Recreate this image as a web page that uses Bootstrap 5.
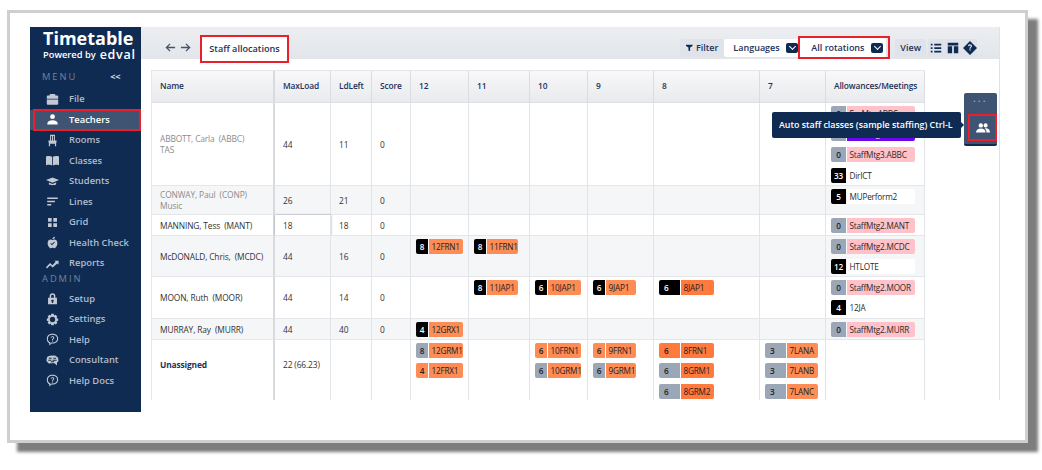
<!DOCTYPE html>
<html lang="en"><head><meta charset="utf-8"><title>Staff allocations</title>
<link href="https://cdn.jsdelivr.net/npm/bootstrap@5.3.0/dist/css/bootstrap.min.css" rel="stylesheet">
<style>
html,body{height:100%;overflow:hidden;background:#fff}
body{font-family:"Open Sans","Noto Sans",sans-serif;font-size:8.4px;color:#333;padding:10px 0 0 7px}
.frame{width:1021px;height:433px;border:3px solid #cfcfcf;background:#fff;box-shadow:10px 9px 3px #7d7d7d;padding:14px 0 0 20px}
.side{width:111px;height:385px;background:#0f2b52;color:#b9c1cd;flex:none;padding-top:1px}
.brand{color:#fff;font-weight:700;font-size:18px;line-height:21px;padding-left:13px}
.brand2{color:#fff;font-weight:600;font-size:9.3px;line-height:11px;padding-left:13px;white-space:nowrap;display:flex;align-items:center;gap:4px;height:11px}
.brand2 b{font-weight:600;font-size:12.5px;letter-spacing:.7px;line-height:11px}
.sect{color:#73839b;font-size:9.3px;letter-spacing:2px;padding:0 21px 0 12px;line-height:13px}
.sect.m1{margin-top:10px;margin-bottom:6px}
.sect.m1 .cc{letter-spacing:-.5px;color:#d5dae2;font-weight:700}
.sect.m2{line-height:12px;margin-top:-1px;margin-bottom:4px}
.side .nav-link{display:flex;align-items:center;height:20.5px;padding:0 0 0 15.5px;color:#b4bcc9;font-size:9.4px;font-weight:600;gap:10.5px;white-space:nowrap;position:relative}
.side .nav-link svg{width:13px;height:13px;flex:none;fill:#c3c9d3}
.side .nav-link.act{background:#3f5373;color:#fff}
.side .nav-link.act::after{content:"";position:absolute;left:3px;right:0;top:-1px;bottom:-1px;border:2px solid #e8202c}
.side .nav-link.act svg{fill:#fff}
.mainp{width:859px;height:373px;border-right:1px solid #dfe2e6;overflow:hidden;position:relative;flex:none}
.topb{height:32px;background:linear-gradient(#eceef1,#e2e5ea);padding:9px 22px 0 24px}
.arrows svg{width:11px;height:11px;fill:none;stroke:#42546f;stroke-width:1.4}
.tabb{height:28px;width:89px;align-self:flex-start;margin:-1px 0 0 9px;border:2px solid #e8202c;background:#fff;color:#1c3358;font-weight:600;font-size:9.1px;line-height:24px;text-align:center;white-space:nowrap}
.tbtn{font-size:9px;font-weight:600;color:#1c3358;padding:0 5px;height:18px;line-height:18px;border-radius:2px;background:#e0e4ea;white-space:nowrap;border:0}
.tbtn.fl{gap:3px;padding:0 6px 0 6px;width:44px}
.dd{background:#fff;height:18px;display:flex;align-items:center;justify-content:space-between;font-size:9px;font-weight:600;color:#1c3358;white-space:nowrap}
.dd i{width:12px;height:10px;border-radius:2px;background:#0f2b52;display:flex;align-items:center;justify-content:center}
.dd i::after{content:"";width:5px;height:5px;border:solid #fff;border-width:0 1.5px 1.5px 0;transform:translateY(-1px) rotate(45deg)}
.dd1{width:75px;padding:0 1px 0 9px;border-radius:2px 0 0 2px}
.dd2{width:92px;height:23px;padding:0 5px 0 11px;border:2px solid #e8202c;margin-left:-1px;box-shadow:inset -2px 0 0 #e0e4ea}
.vicons{background:#e0e4ea;height:18px;margin-left:2px;padding:0 0 0 1px;border-radius:2px;gap:3px}
.vicons svg{width:14px;height:14px;fill:#0f2b52}
.tw{padding:11px 0 0 10px}
.grid{width:773px;table-layout:fixed;border-collapse:separate;border-spacing:0;margin:0;font-size:8.4px;--bs-table-bg:transparent;border-top:1px solid #e4e6ea;border-left:1px solid #e4e6ea;letter-spacing:-.13px}
.grid th{height:32px;padding:0 0 0 8px;background:linear-gradient(#f8f8f9,#e8eaed);color:#1c3358;font-weight:600;font-size:8.4px;vertical-align:middle;border:0;border-right:1px solid #d9dce1;border-bottom:1px solid #dcdfe4;white-space:nowrap}
.grid td{padding:0 0 0 8px;vertical-align:middle;border:0;border-right:1px solid #e1e4e8;border-bottom:1px solid #e4e6ea;line-height:11px;white-space:nowrap;color:#333;box-shadow:none}
.grid td.ch{padding:2.500px 0 0 5px;vertical-align:top}
.grid td.upp{vertical-align:top;padding-top:19px}
.grid td:first-child,.grid th:first-child{border-right:2px solid #d8dade}
.grid .alt td{background:#f5f6f8}
.grid .dim{color:#8b8b8b}
.grid .una{color:#1c3358;font-weight:700}
.grid td.inp{background:#fff;box-shadow:0 0 2px #9aa0a8}
.r1{height:83px}.r2{height:29px}.r3{height:21px}.r4{height:41px}.r5{height:42px}.r6{height:21px}.r7{height:70px}
.chip{display:flex;height:15px;line-height:15px;margin-bottom:5.7px;border-radius:2px;overflow:hidden;font-size:8.200px;color:#2a2a2a;letter-spacing:-.2px}
.chip:last-child{margin-bottom:0}
.chip b{font-weight:600;text-align:center;flex:none;margin-right:1px;width:12px}
.chip span{flex:1;padding-left:2.500px;white-space:nowrap;overflow:hidden}
.k{background:#000;color:#fff}.g{background:#9ba6b6;color:#222}.o{background:#ff8c55;color:#222}.o2{background:#ff7a3c}
.s{background:#ffc2c8}.w{background:#fff}.pu{background:#6a06f0;color:#fff}
.w47{width:47px}.w44{width:44px}.w46{width:46px}.w43{width:43px}
.w55{width:55px}.w55 b{width:21px;text-align:left;padding-left:5px}
.w53{width:53px}.w53 b{width:21px;text-align:left;padding-left:5px}
.w84{width:84px}.w84 b{width:15px}
.tipx{position:absolute;left:631px;top:85px;width:189px;height:26px;background:#0f2b52;color:#fff;font-weight:600;font-size:8.900px;line-height:26px;padding-left:7px;border-radius:2px;white-space:nowrap}
.tipx::after{content:"";position:absolute;right:-3px;top:9px;border:4px solid transparent;border-left-color:#0f2b52;border-right:0}
.rail{position:absolute;left:823px;top:66px;width:33px;height:53px;background:#3f5373;border-radius:2px;border-bottom:2px solid #0f2b52}
.rail .dots{color:#a9b3c2;text-align:center;font-size:8px;letter-spacing:2.500px;line-height:11px;font-weight:700;padding-bottom:4px}
.rail .rb{margin:6px 0 0 4px;width:29px;height:27px;border:2px solid #e8202c;display:flex;align-items:center;justify-content:center}
.rail svg{width:14px;height:14px;fill:#fff}
</style></head><body>
<div class="frame"><div class="d-flex">
<div class="side">
<div class="brand">Timetable</div>
<div class="brand2"><span>Powered by</span><b>edval</b></div>
<div class="sect m1 d-flex justify-content-between"><span>MENU</span><span class="cc">&lt;&lt;</span></div>
<nav class="nav flex-column">
<a class="nav-link"><svg viewBox="0 0 16 16"><path d="M4.500 3V2.200C4.500 1.600 4.900 1.300 5.500 1.300H10.500C11.100 1.300 11.500 1.600 11.500 2.200V3H14C14.600 3 15 3.400 15 4V7H1V4C1 3.400 1.400 3 2 3ZM1 8H15V13.500C15 14.100 14.600 14.500 14 14.500H2C1.400 14.500 1 14.100 1 13.500Z"/></svg>File</a>
<a class="nav-link act"><svg viewBox="0 0 16 16"><circle cx="8" cy="4.500" r="3"/><path d="M1.500 14C1.500 10.500 4 9 8 9S14.500 10.500 14.500 14Z"/></svg>Teachers</a>
<a class="nav-link"><svg viewBox="0 0 16 16"><path d="M5 1H11V8H13V10.500H12.500V15H11V12H5V15H3.500V10.500H3V8H5ZM6.300 2.500V8H7.400V2.500ZM8.600 2.500V8H9.700V2.500Z" fill-rule="evenodd"/></svg>Rooms</a>
<a class="nav-link"><svg viewBox="0 0 16 16"><path d="M0 3C3 2.300 6 2.500 7.500 3.500V14C6 13 3 13 0 13.700ZM8.500 3.500C10 2.500 13 2.300 16 3V13.700C13 13 10 13 8.500 14Z"/></svg>Classes</a>
<a class="nav-link"><svg viewBox="0 0 16 16"><path d="M8 3L16 6.300 8 9.600 0 6.300ZM3.500 9.300L8 11.200 12.500 9.300V11.500C11 13 5 13 3.500 11.500Z"/></svg>Students</a>
<a class="nav-link"><svg viewBox="0 0 16 16"><path d="M1.500 3H14.500V5H1.500ZM1.500 7H11V9H1.500ZM1.500 11H6.500V13H1.500Z"/></svg>Lines</a>
<a class="nav-link"><svg viewBox="0 0 16 16"><path d="M2.500 2.500H7V7H2.500ZM9 2.500H13.500V7H9ZM2.500 9H7V13.500H2.500ZM9 9H13.500V13.500H9Z"/></svg>Grid</a>
<a class="nav-link"><svg viewBox="0 0 16 16"><path fill-rule="evenodd" d="M8 5C10 3.700 14 4.200 14 8.800 14 12 11.500 15 10 15 9 15 8.700 14.600 8 14.600S7 15 6 15C4.500 15 2 12 2 8.800 2 4.200 6 3.700 8 5ZM8 4C8 2.500 9 1 11 1 11 2.500 10 4 8 4ZM5.300 9.300L7.300 11.500 11 7.800 10 7 7.300 9.700 6.200 8.500Z"/></svg>Health Check</a>
<a class="nav-link"><svg viewBox="0 0 16 16"><path d="M0 12.500L5 7.500 8 10 11.800 5.800 10.500 4.500H15.500V9.500L13.900 7.900 8.200 13 5.200 10.300 1.200 14Z"/></svg>Reports</a>
<div class="sect m2">ADMIN</div>
<a class="nav-link"><svg viewBox="0 0 16 16"><path fill-rule="evenodd" d="M4.500 7V5A3.500 3.500 0 0 1 11.500 5V7H13.500V15H2.500V7ZM6.300 7H9.700V5A1.700 1.700 0 0 0 6.300 5ZM8 9.500A1.300 1.300 0 0 0 7.300 12V13.500H8.700V12A1.300 1.300 0 0 0 8 9.500Z"/></svg>Setup</a>
<a class="nav-link"><svg viewBox="0 0 16 16"><path fill-rule="evenodd" d="M6.500 1H9.500L10 3.200 12 2.200 14 4.500 12.800 6.300 15 7V9.500L12.800 10 14 12 12 14 10 12.800 9.500 15H6.500L6 12.800 4 14 2 12 3.200 10 1 9.500V7L3.200 6.300 2 4.500 4 2.200 6 3.200ZM8 4.700A3.300 3.300 0 1 0 8 11.300 3.300 3.300 0 1 0 8 4.700Z"/></svg>Settings</a>
<a class="nav-link"><svg viewBox="0 0 16 16"><path fill-rule="evenodd" d="M8 1C12 1 15 3.500 15 7S12 13 8 13H7L4 15.500V12.500C2 11.500 1 9.500 1 7 1 3.500 4 1 8 1ZM8 2.300C4.800 2.300 2.300 4.200 2.300 7 2.300 9 3.300 10.700 5.300 11.500V12.800L6.500 11.700H8C11.200 11.700 13.700 9.800 13.700 7S11.200 2.300 8 2.300ZM8 4C9.300 4 10.200 4.700 10.200 5.700 10.200 7.200 8.600 7.200 8.600 8.500H7.400C7.400 6.800 9 6.700 9 5.700 9 5.200 8.600 5 8 5 7.400 5 7 5.300 6.900 5.900L5.800 5.700C6 4.700 6.800 4 8 4ZM7.300 9.200H8.700V10.500H7.300Z"/></svg>Help</a>
<a class="nav-link"><svg viewBox="0 0 16 16"><path fill-rule="evenodd" d="M4 2.500C5 1.500 7 1.500 8 2.200 9.500 1.300 12 1.700 12.800 3 14.500 3.300 15.500 5 15 6.500 16 8 15 10 13.500 10.300V14L10.500 11.500H6C4.500 12 2.500 11.500 2 10 .5 9.500 0 7.500 1 6.300 .5 4.500 2 2.500 4 2.500ZM3.500 4.500V5.700H7V4.500ZM9 4.500V5.700H12.500V4.500ZM2.800 7V8.200H6.500V7ZM8 7V8.200H13V7ZM6 9V10H10V9Z"/></svg>Consultant</a>
<a class="nav-link"><svg viewBox="0 0 16 16"><path fill-rule="evenodd" d="M8 1C12 1 15 3.500 15 7S12 13 8 13H7L4 15.500V12.500C2 11.500 1 9.500 1 7 1 3.500 4 1 8 1ZM8 2.300C4.800 2.300 2.300 4.200 2.300 7 2.300 9 3.300 10.700 5.300 11.500V12.800L6.500 11.700H8C11.200 11.700 13.700 9.800 13.700 7S11.200 2.300 8 2.300ZM8 4C9.300 4 10.200 4.700 10.200 5.700 10.200 7.200 8.600 7.200 8.600 8.500H7.400C7.400 6.800 9 6.700 9 5.700 9 5.200 8.600 5 8 5 7.400 5 7 5.300 6.900 5.900L5.800 5.700C6 4.700 6.800 4 8 4ZM7.300 9.200H8.700V10.500H7.300Z"/></svg>Help Docs</a>
</nav>
</div>
<div class="mainp">
<div class="topb d-flex align-items-center">
<div class="arrows d-flex gap-1"><svg viewBox="0 0 12 12"><path d="M11 6H1.500M5.500 2L1.500 6 5.500 10"/></svg><svg viewBox="0 0 12 12"><path d="M1 6H10.500M6.500 2L10.500 6 6.500 10"/></svg></div>
<div class="tabb">Staff allocations</div>
<div class="ms-auto d-flex align-items-center">
<div class="tbtn fl d-flex align-items-center"><svg width="7" height="8" viewBox="0 0 8 8" fill="#0f2b52"><path d="M0 0H8V1.500L5 3.500V8L3 7V3.500L0 1.500Z"/></svg>Filter</div>
<div class="dd dd1">Languages<i></i></div>
<div class="dd dd2">All rotations<i></i></div>
<div class="tbtn" style="margin-left:5px">View</div>
<div class="vicons d-flex align-items-center">
<svg viewBox="0 0 16 16"><path d="M2 3H4V5H2ZM6 3H14V5H6ZM2 7H4V9H2ZM6 7H14V9H6ZM2 11H4V13H2ZM6 11H14V13H6Z"/></svg>
<svg viewBox="0 0 16 16"><path d="M2 2H14V5H2ZM2 6H7V14H2ZM9 6H14V14H9Z"/></svg>
<svg viewBox="0 0 16 16"><path fill-rule="evenodd" d="M8 0L16 8 8 16 0 8ZM8 3.800C6.700 3.800 5.800 4.500 5.600 5.700L6.900 5.900C7 5.300 7.400 5 8 5 8.600 5 9 5.300 9 5.800 9 6.800 7.400 7 7.400 8.800H8.700C8.700 7.400 10.300 7.300 10.300 5.800 10.300 4.600 9.400 3.800 8 3.800ZM7.300 9.500V10.900H8.700V9.500Z"/></svg>
</div></div></div>
<div class="tw">
<table class="table grid"><colgroup><col style="width:123px"><col style="width:56px"><col style="width:41px"><col style="width:39px"><col style="width:58px"><col style="width:61px"><col style="width:58px"><col style="width:66px"><col style="width:106px"><col style="width:66px"><col style="width:99px"></colgroup>
<thead><tr><th>Name</th><th>MaxLoad</th><th>LdLeft</th><th>Score</th><th>12</th><th>11</th><th>10</th><th>9</th><th>8</th><th>7</th><th>Allowances/Meetings</th></tr></thead>
<tbody>
<tr class="r1"><td class="dim">ABBOTT, Carla&nbsp; (ABBC)<br>TAS</td><td>44</td><td>11</td><td>0</td><td></td><td></td><td></td><td></td><td></td><td></td><td class="ch">
<div class="chip w84"><b class="g">0</b><span class="s">FacMtg.ABBC</span></div><div class="chip w84"><b class="g">0</b><span class="pu">StaffMtg.ABBC</span></div><div class="chip w84"><b class="g">0</b><span class="s">StaffMtg3.ABBC</span></div><div class="chip w84"><b class="k">33</b><span class="w">DirICT</span></div></td></tr>
<tr class="r2 alt"><td class="dim">CONWAY, Paul&nbsp; (CONP)<br>Music</td><td>26</td><td>21</td><td>0</td><td></td><td></td><td></td><td></td><td></td><td></td><td class="ch"><div class="chip w84"><b class="k">5</b><span class="w">MUPerform2</span></div></td></tr>
<tr class="r3"><td>MANNING, Tess&nbsp; (MANT)</td><td class="inp">18</td><td>18</td><td>0</td><td></td><td></td><td></td><td></td><td></td><td></td><td class="ch"><div class="chip w84"><b class="g">0</b><span class="s">StaffMtg2.MANT</span></div></td></tr>
<tr class="r4 alt"><td>McDONALD, Chris,&nbsp; (MCDC)</td><td>44</td><td>16</td><td>0</td><td class="ch"><div class="chip w47"><b class="k">8</b><span class="o">12FRN1</span></div></td><td class="ch"><div class="chip w44"><b class="k">8</b><span class="o">11FRN1</span></div></td><td></td><td></td><td></td><td></td><td class="ch"><div class="chip w84"><b class="g">0</b><span class="s">StaffMtg2.MCDC</span></div><div class="chip w84"><b class="k">12</b><span class="w">HTLOTE</span></div></td></tr>
<tr class="r5"><td>MOON, Ruth&nbsp; (MOOR)</td><td>44</td><td>14</td><td>0</td><td></td><td class="ch"><div class="chip w44"><b class="k">8</b><span class="o">11JAP1</span></div></td><td class="ch"><div class="chip w46"><b class="k">6</b><span class="o">10JAP1</span></div></td><td class="ch"><div class="chip w43"><b class="k">6</b><span class="o">9JAP1</span></div></td><td class="ch"><div class="chip w55"><b class="k">6</b><span class="o o2">8JAP1</span></div></td><td></td><td class="ch"><div class="chip w84"><b class="g">0</b><span class="s">StaffMtg2.MOOR</span></div><div class="chip w84"><b class="k">4</b><span class="w">12JA</span></div></td></tr>
<tr class="r6 alt"><td>MURRAY, Ray&nbsp; (MURR)</td><td>44</td><td>40</td><td>0</td><td class="ch"><div class="chip w47"><b class="k">4</b><span class="o">12GRX1</span></div></td><td></td><td></td><td></td><td></td><td></td><td class="ch"><div class="chip w84"><b class="g">0</b><span class="s">StaffMtg2.MURR</span></div></td></tr>
<tr class="r7"><td class="una upp">Unassigned</td><td class="upp">22 (66.23)</td><td></td><td></td><td class="ch"><div class="chip w47"><b class="g">8</b><span class="o">12GRM1</span></div><div class="chip w47"><b class="o">4</b><span class="o">12FRX1</span></div></td><td></td><td class="ch"><div class="chip w46"><b class="o">6</b><span class="o">10FRN1</span></div><div class="chip w46"><b class="g">6</b><span class="o">10GRM1</span></div></td><td class="ch"><div class="chip w43"><b class="o">6</b><span class="o">9FRN1</span></div><div class="chip w43"><b class="g">6</b><span class="o">9GRM1</span></div></td><td class="ch"><div class="chip w55"><b class="o o2">6</b><span class="o o2">8FRN1</span></div><div class="chip w55"><b class="g">6</b><span class="o o2">8GRM1</span></div><div class="chip w55"><b class="g">6</b><span class="o o2">8GRM2</span></div></td><td class="ch"><div class="chip w53"><b class="g">3</b><span class="o">7LANA</span></div><div class="chip w53"><b class="g">3</b><span class="o">7LANB</span></div><div class="chip w53"><b class="g">3</b><span class="o">7LANC</span></div></td><td></td></tr>
</tbody></table>
</div>
<div class="tipx">Auto staff classes (sample staffing) Ctrl-L</div>
<div class="rail"><div class="dots">...</div><div class="rb"><svg viewBox="0 0 16 16"><circle cx="5.500" cy="5" r="2.500"/><circle cx="11" cy="5" r="2.300"/><path d="M0 13C0 10 2.500 8.500 5.500 8.500S11 10 11 13ZM12 13C12 11 11.500 9.500 10 8.500 13 8 16 9.500 16 13Z"/></svg></div></div>
</div>
</div></div>
<script src="https://cdn.jsdelivr.net/npm/bootstrap@5.3.0/dist/js/bootstrap.bundle.min.js"></script>
</body></html>
